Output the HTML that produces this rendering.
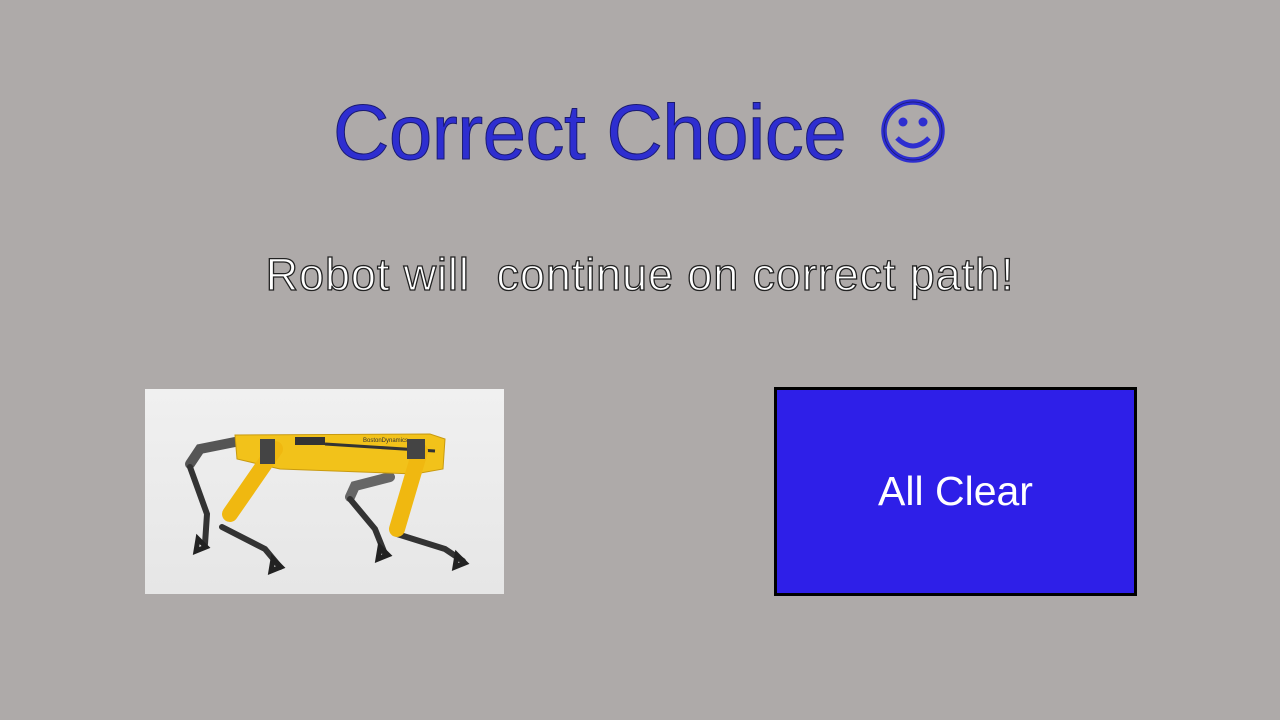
<!DOCTYPE html>
<html><head><meta charset="utf-8"><style>
html,body{margin:0;padding:0;}
body{width:1280px;height:720px;background:#aeaaa9;position:relative;overflow:hidden;font-family:"Liberation Sans",sans-serif;}
.t{position:absolute;left:333px;top:84px;font-size:78px;color:#2e2ed0;-webkit-text-stroke:1px #1a1a70;line-height:96px;white-space:nowrap;letter-spacing:-0.5px}
.s{position:absolute;left:0;width:1280px;text-align:center;top:248px;font-size:45px;color:#fff;-webkit-text-stroke:1.3px #222;line-height:54px;white-space:nowrap;letter-spacing:0.9px}
.img{position:absolute;left:145px;top:389px;width:359px;height:205px;background:linear-gradient(#f0f0f0,#e6e6e6)}
.btn{position:absolute;left:774px;top:387px;width:357px;height:203px;border:3px solid #000;background:#2e1fe8;color:#fff;font-size:41px;display:flex;align-items:center;justify-content:center}
</style></head><body>
<div class="t">Correct Choice</div>
<svg style="position:absolute;left:878px;top:96px" width="70" height="70" viewBox="0 0 70 70">
<circle cx="35" cy="35" r="29" fill="none" stroke="#2e2ed0" stroke-width="5.5"/>
<circle cx="35" cy="35" r="29" fill="none" stroke="#1a1a70" stroke-width="0.8"/>
<circle cx="25" cy="26" r="4.5" fill="#2e2ed0"/><circle cx="45" cy="26" r="4.5" fill="#2e2ed0"/>
<path d="M19 42 Q35 58 51 42" fill="none" stroke="#2e2ed0" stroke-width="5"/>
</svg>
<div class="s">Robot will &nbsp;continue on correct path!</div>
<div class="img"><svg width="359" height="205" viewBox="0 0 359 205">
<g stroke-linecap="round" fill="none">
<path d="M95 52 L55 60 L45 75" stroke="#555" stroke-width="10"/>
<path d="M45 78 L62 125 L60 155" stroke="#333" stroke-width="6"/>
<path d="M77 138 L120 160 L135 178" stroke="#333" stroke-width="6"/>
<path d="M245 88 L210 97 L205 108" stroke="#666" stroke-width="10"/>
<path d="M205 110 L230 140 L240 165" stroke="#333" stroke-width="6"/>
<path d="M252 145 L300 160 L318 172" stroke="#333" stroke-width="6"/>
</g>
<path d="M90 46 L285 45 L300 50 L298 80 L270 85 L135 80 L92 70 Z" fill="#f2c21a" stroke="#c89a10"/>
<path d="M150 48 L180 48 L180 56 L150 56 Z" fill="#333"/>
<path d="M180 55 L290 62" stroke="#333" stroke-width="3"/>
<text x="218" y="53" font-size="6" fill="#333" font-family="Liberation Sans">BostonDynamics</text>
<path d="M130 60 L85 125" stroke="#f0b810" stroke-width="16" stroke-linecap="round"/>
<path d="M275 62 L252 140" stroke="#f0b810" stroke-width="16" stroke-linecap="round"/>
<path d="M115 50 L130 50 L130 75 L115 75 Z M262 50 L280 50 L280 70 L262 70Z" fill="#444"/>
<g fill="none" stroke="#222" stroke-width="5">
<path d="M53 150 l8 8 l-10 4z"/><path d="M128 170 l8 8 l-10 4z"/><path d="M235 158 l8 8 l-10 4z"/><path d="M312 166 l8 8 l-10 4z"/></g>
</svg></div>
<div class="btn">All Clear</div>
</body></html>
